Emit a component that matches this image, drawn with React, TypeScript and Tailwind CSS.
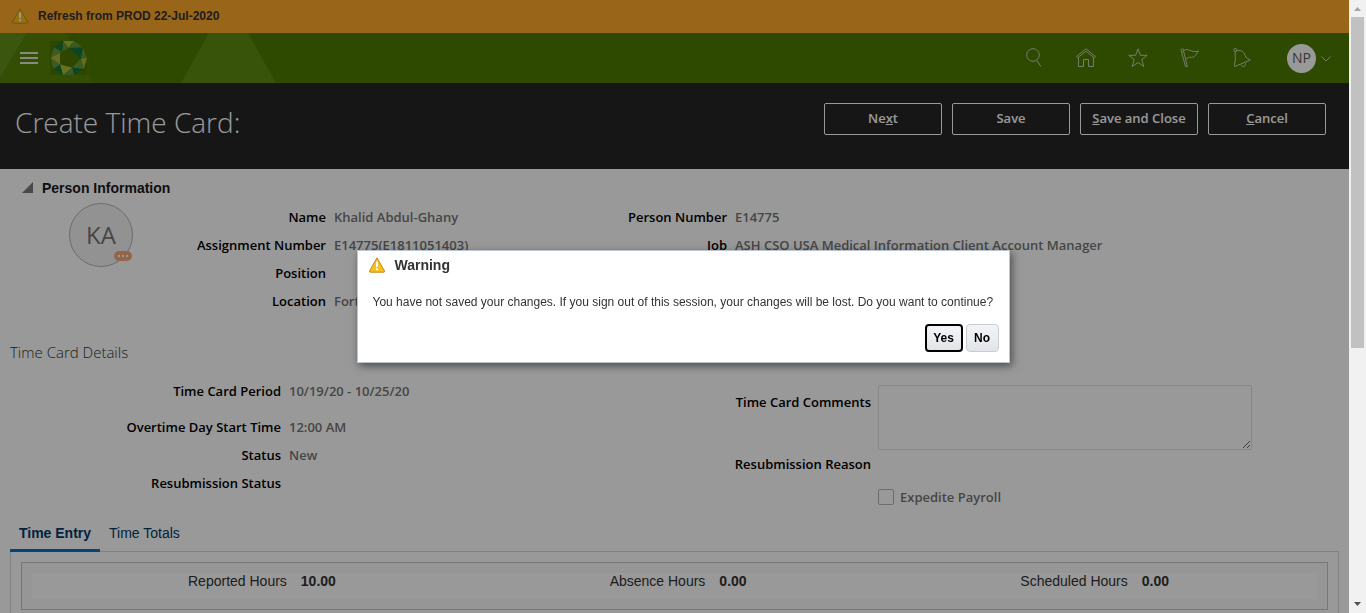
import type { ReactNode } from 'react';

const ui = "font-['Open_Sans','Noto_Sans',sans-serif]";

function WarningIcon({ label }: { label: string }) {
  return (
    <svg role="img" aria-label={label} width="16" height="16" viewBox="0 0 16 16" className="shrink-0">
      <path d="M8 .8 L15.5 14 Q15.8 15.2 14.8 15.2 H1.2 Q.2 15.2 .5 14 Z" fill="#f9bf1a" stroke="#c08a1c" strokeWidth="1" strokeLinejoin="round" />
      <path d="M7 4.5h2v5.5H7z M7 11.3h2v2H7z" fill="#fff" />
    </svg>
  );
}

function Logo() {
  return (
    <svg width="38" height="34" viewBox="0 0 38 34" role="img" aria-label="Company logo">
      <path d="M0 0H24L37 17V34H0Z" fill="#4d7600" />
      <path d="M13 0 L24 0 L18.5 7Z" fill="#b0bd38" />
      <path d="M24 0 L33 6.5 L18.5 7Z" fill="#5f9638" />
      <path d="M13 0 L18.5 7 L12 10.5Z" fill="#5f9640" />
      <path d="M13 0 L12 10.5 L4 6.5Z" fill="#14753a" />
      <path d="M4 6.5 L12 10.5 L.5 17Z" fill="#639a3c" />
      <path d="M12 10.5 L10 11.5 L10 23.5 L.5 17Z" fill="#b0b534" />
      <path d="M18.5 7 L33 6.5 L31 17.5Z" fill="#14753a" />
      <path d="M33 6.5 L37 17 L31 17.5Z" fill="#5f9640" />
      <path d="M31 17.5 L37 17 L33.5 28Z" fill="#a8b838" />
      <path d="M31 17.5 L33.5 28 L22 26.5Z" fill="#639a3c" />
      <path d="M33.5 28 L24 34 L22 26.5Z" fill="#14753a" />
      <path d="M22 26.5 L24 34 L13 34Z" fill="#5f9640" />
      <path d="M10 23.5 L22 26.5 L13 34Z" fill="#b0bd38" />
      <path d="M.5 17 L10 23.5 L3.5 28Z" fill="#639a3c" />
      <path d="M3.5 28 L10 23.5 L13 34Z" fill="#14753a" />
    </svg>
  );
}

function HeaderIcon({ label, children }: { label: string; children: ReactNode }) {
  return (
    <button type="button" aria-label={label} className="flex size-8 items-center justify-center">
      <svg width="20" height="20" viewBox="0 0 20 20" fill="none" stroke="#c6cfb4" strokeWidth="1" strokeLinejoin="round">
        {children}
      </svg>
    </button>
  );
}

function ActionButton({ children }: { children: ReactNode }) {
  return (
    <button type="button" className={`h-8 w-[118px] rounded-xs border border-white pb-px text-[13px] font-semibold text-white ${ui}`}>
      {children}
    </button>
  );
}

function Field({ label, value }: { label: string; value?: string }) {
  return (
    <div className="flex h-7 items-center gap-2">
      <dt className="w-[192px] shrink-0 text-right font-semibold text-black">{label}</dt>
      <dd className="whitespace-nowrap font-semibold text-[#757575]">{value}</dd>
    </div>
  );
}

function Total({ label, value }: { label: string; value: string }) {
  return (
    <div className="flex gap-[14px]">
      <dt>{label}</dt>
      <dd className="font-bold">{value}</dd>
    </div>
  );
}

export default function App() {
  return (
    <div className="flex h-screen overflow-hidden bg-white font-['Liberation_Sans',Arial,sans-serif] text-sm text-[#333]">
      <div className="relative flex min-w-0 flex-1 flex-col overflow-hidden">
        <div className="flex h-[33px] shrink-0 items-center gap-[10px] bg-[#ffaa2a] pb-px pl-3 text-xs font-bold">
          <WarningIcon label="Notice" />
          <span>Refresh from PROD 22-Jul-2020</span>
        </div>

        <header className="relative flex h-[50px] shrink-0 items-center justify-between bg-[#4d7b00] pl-5 pr-[17px]">
          <svg aria-hidden="true" className="absolute left-0 top-0" width="280" height="50" viewBox="0 0 280 50">
            <path d="M0 0H27L0 45Z" fill="#638f18" />
            <path d="M27 0H66L93 50H0V45Z" fill="#578408" />
            <path d="M209 0H248L276 50H181Z" fill="#5e8c12" />
          </svg>
          <div className="relative flex items-center gap-3">
            <button type="button" aria-label="Navigator" className="flex w-[18px] flex-col gap-[3px]">
              <span className="h-[2px] bg-[#dfe6d6]" />
              <span className="h-[2px] bg-[#dfe6d6]" />
              <span className="h-[2px] bg-[#dfe6d6]" />
            </button>
            <Logo />
          </div>
          <div className="relative flex items-center gap-5">
            <HeaderIcon label="Search">
              <circle cx="9" cy="7" r="6.3" />
              <path d="M12.5 12.3 L17 18.5" />
            </HeaderIcon>
            <HeaderIcon label="Home">
              <path d="M.5 8.5 L10 .8 L19.5 8.5 L18.3 9.8 L10 3.2 L1.7 9.8Z" />
              <path d="M2.5 9.5V18.5H7.5V11.5H12.5V18.5H17.5V9.5" />
            </HeaderIcon>
            <HeaderIcon label="Favorites">
              <path d="M10 .8 L12.4 7.3 H19.2 L13.8 11.5 L15.8 18.5 L10 14.5 L4.2 18.5 L6.2 11.5 L.8 7.3 H7.6Z" />
            </HeaderIcon>
            <HeaderIcon label="Watchlist">
              <circle cx="2.4" cy="2.3" r="1.4" />
              <path d="M1.4 3.8 L5.6 18.6 H7.4 L3.6 3.2" />
              <path d="M3.8 2.6 C8 -1 11 5.5 18.6 3 C16.5 5 16.5 7.5 13.5 9 C10.5 10 8.5 8 6 11.3" />
            </HeaderIcon>
            <HeaderIcon label="Notifications">
              <path d="M3.2 3.5 C9 1 12 3.5 13 7.5 C14 10.5 17 10.5 18.3 12 L2.8 18.5 C1.5 16.5 3.8 14 3.2 10.5Z" />
              <circle cx="3.3" cy="1.9" r="1.5" />
              <path d="M9.5 16.8 C10.5 20 14 18.5 13.4 15.2" />
            </HeaderIcon>
            <button type="button" aria-label="Settings and actions" className="ml-[9px] flex items-center gap-1">
              <span className={`flex size-[29px] items-center justify-center rounded-full bg-white text-sm text-[#5b5b5b] ${ui}`}>NP</span>
              <svg width="12" height="12" viewBox="0 0 12 12" fill="none" stroke="#c6cfb4"><path d="M1.5 4.5 L6 9 L10.5 4.5" /></svg>
            </button>
          </div>
        </header>

        <div className="flex h-[86px] shrink-0 items-start justify-between bg-[#262626] pl-[15px] pr-[23px] pt-5">
          <h1 className={`text-[28px] font-light leading-[38px] text-white ${ui}`}>Create Time Card:</h1>
          <div className="flex gap-[10px]">
            <ActionButton>Ne<u>x</u>t</ActionButton>
            <ActionButton>Save</ActionButton>
            <ActionButton><u>S</u>ave and Close</ActionButton>
            <ActionButton><u>C</u>ancel</ActionButton>
          </div>
        </div>

        <main className={`shrink-0 text-[13px] ${ui}`}>
          <section>
            <h2 className="flex items-center gap-[9px] pl-[22px] pt-[9px] font-['Liberation_Sans',Arial,sans-serif] text-sm font-bold text-[#1a1a1a]">
              <svg width="11" height="13" viewBox="0 0 11 13" aria-hidden="true"><path d="M11 0V11H0Z" fill="#777c80" /></svg>
              Person Information
            </h2>
            <div className="flex pl-[69px]">
              <div className="relative mt-[5px] flex size-16 items-center justify-center rounded-full border border-[#b5b5b5] bg-[#f3f3f3] text-2xl text-[#757575]">
                KA
                <span className="absolute bottom-[5px] right-0 flex h-[10px] w-[18px] items-center justify-center gap-[2px] rounded-full bg-[#f7a878]">
                  <i className="size-[2px] bg-white" /><i className="size-[2px] bg-white" /><i className="size-[2px] bg-white" />
                </span>
              </div>
              <dl className="ml-px w-[401px] pt-[5px]">
                <Field label="Name" value="Khalid Abdul-Ghany" />
                <Field label="Assignment Number" value="E14775(E1811051403)" />
                <Field label="Position" />
                <Field label="Location" value="Fort" />
              </dl>
              <dl className="pt-[5px]">
                <Field label="Person Number" value="E14775" />
                <Field label="Job" value="ASH CSO USA Medical Information Client Account Manager" />
              </dl>
            </div>
          </section>

          <section>
            <h2 className="mt-[25px] pl-[10px] text-[15px] font-light leading-6">Time Card Details</h2>
            <div className="mt-[13px] flex pl-[89px]">
              <dl className="w-[590px]">
                <div className="mb-2"><Field label="Time Card Period" value="10/19/20 - 10/25/20" /></div>
                <Field label="Overtime Day Start Time" value="12:00 AM" />
                <Field label="Status" value="New" />
                <Field label="Resubmission Status" />
              </dl>
              <div className="pt-2">
                <div className="flex gap-[7px]">
                  <label htmlFor="comments" className="w-[192px] pt-2 text-right font-semibold text-black">Time Card Comments</label>
                  <textarea id="comments" className="h-[65px] w-[374px] resize rounded-xs border border-[#dfe1e3] bg-white" />
                </div>
                <div className="flex h-7 items-center font-semibold text-black"><span className="w-[192px] text-right">Resubmission Reason</span></div>
                <label className="ml-[199px] mt-[10px] flex items-center gap-[6px] font-semibold text-[#757575]">
                  <input type="checkbox" className="size-4 appearance-none rounded-xs border border-[#b0b7bd] bg-white" />
                  Expedite Payroll
                </label>
              </div>
            </div>
          </section>

          <section className="mt-[11px] px-[10px] font-['Liberation_Sans',Arial,sans-serif] text-sm">
            <div role="tablist" className="flex items-start text-[#003b6b]">
              <button type="button" role="tab" aria-selected="true" className="relative z-10 -mb-px h-[34px] w-[90px] border-b-[3px] border-[#0572ce] font-bold">Time Entry</button>
              <button type="button" role="tab" aria-selected="false" className="h-[31px] px-[9px]">Time Totals</button>
            </div>
            <div className="border border-b-0 border-[#d6d7d8] p-[10px]">
              <div className="border border-[#c4c6c8] bg-[#fafafa] p-[10px]">
                <dl className="flex h-[26px] justify-between bg-white pl-[156px] pr-[148px] leading-4">
                  <Total label="Reported Hours" value="10.00" />
                  <Total label="Absence Hours" value="0.00" />
                  <Total label="Scheduled Hours" value="0.00" />
                </dl>
              </div>
            </div>
          </section>
        </main>

        <div className="absolute inset-0 z-20 bg-black/40" />
      </div>

      <div aria-hidden="true" className="flex w-[17px] shrink-0 flex-col items-center justify-between bg-[#f1f1f1]">
        <svg width="17" height="17" viewBox="0 0 17 17"><path d="M8.5 7 L12 11H5Z" fill="#a3a3a3" /></svg>
        <div className="mb-auto h-[54%] w-[13px] bg-[#c1c1c1]" />
        <svg width="17" height="17" viewBox="0 0 17 17"><path d="M5 6H12L8.5 10Z" fill="#505050" /></svg>
      </div>

      <div className="pointer-events-none fixed inset-0 z-30 flex items-center justify-center">
        <div role="dialog" aria-modal="true" aria-labelledby="warning-title" className="pointer-events-auto w-[653px] border border-[#b9c5d0] bg-white shadow-[2px_3px_8px_rgba(0,0,0,0.5)]">
          <h2 id="warning-title" className="flex items-center gap-[10px] px-[11px] pt-1 text-sm font-bold">
            <WarningIcon label="Warning" />
            Warning
          </h2>
          <p className="px-[15px] pt-[19px] text-xs leading-4">
            You have not saved your changes. If you sign out of this session, your changes will be lost. Do you want to continue?
          </p>
          <div className="flex justify-end gap-[3px] px-[10px] pb-[10px] pt-[14px] text-xs font-bold text-black">
            <button type="button" className="h-7 w-[38px] rounded-sm border-2 border-black bg-linear-to-b from-[#f3f4f6] to-[#e2e5e8]">Yes</button>
            <button type="button" className="h-7 w-[33px] rounded-sm border border-[#c4ced7] bg-linear-to-b from-[#f3f4f6] to-[#e2e5e8]">No</button>
          </div>
        </div>
      </div>
    </div>
  );
}
